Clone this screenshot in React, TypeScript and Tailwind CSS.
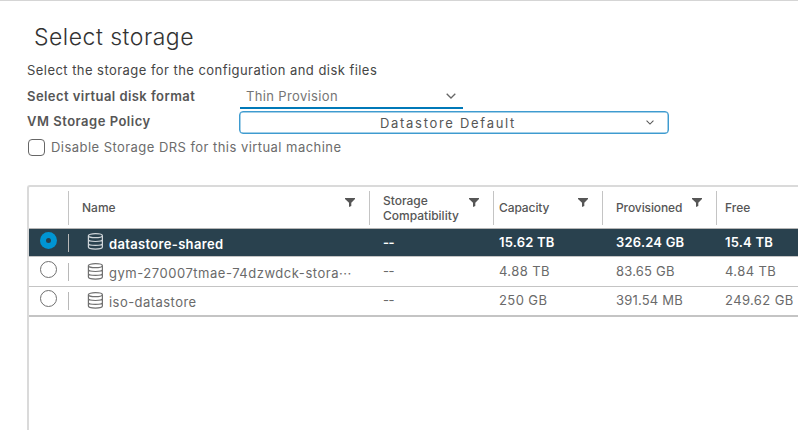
import type { ReactNode } from "react";
import clsx from "clsx";

function Chevron({ className }: { className: string }) {
  return (
    <svg viewBox="0 0 10 6" className={className} fill="none" stroke="currentColor" strokeWidth="1.3">
      <path d="M.7.8 5 5 9.3.8" />
    </svg>
  );
}

function Filter() {
  return (
    <svg viewBox="0 0 10 9" className="h-[9px] w-[10px] shrink-0 fill-[#565656]">
      <path d="M0 0h10v1L6.3 4.7V8L4 9V4.7L0 1z" />
    </svg>
  );
}

function Disk() {
  return (
    <svg viewBox="0 0 16 17" className="h-[17px] w-4 shrink-0" fill="none" stroke="currentColor" strokeWidth="1.2">
      <ellipse cx="8.4" cy="2.7" rx="7" ry="2" />
      <path d="M1.4 2.7v11.4c0 1.1 3.1 2 7 2s7-.9 7-2V2.7M1.4 6.6c0 1.1 3.1 1.9 7 1.9s7-.8 7-1.9M1.4 10.4c0 1.1 3.1 1.9 7 1.9s7-.8 7-1.9" />
    </svg>
  );
}

function HeadCell({ children, filter }: { children?: ReactNode; filter?: boolean }) {
  return (
    <div className="mt-[4px] flex h-[34px] justify-between border-l border-[#c4c4c4] pl-[13px] text-xs font-medium text-[#565656]">
      {children}
      {filter && (
        <div className="mt-[7px] mr-[14px]">
          <Filter />
        </div>
      )}
    </div>
  );
}

const columns = "grid grid-cols-[39px_301px_124px_109px_114px_82px]";

const rows = [
  {
    name: "datastore-shared", nameClass: "pt-px tracking-[0.33px]", iconClass: "-mt-px", height: "h-7", on: true,
    capacity: "15.62 TB", provisioned: "326.24 GB", free: "15.4 TB",
  },
  {
    name: "gym-270007tmae-74dzwdck-stora···", nameClass: "pt-px tracking-[0.53px]", iconClass: "mt-0", height: "h-[30px] pt-px", on: false,
    capacity: "4.88 TB", provisioned: "83.65 GB", free: "4.84 TB",
  },
  {
    name: "iso-datastore", nameClass: "pt-px tracking-[0.45px]", iconClass: "mt-0", height: "h-[30px]", on: false,
    capacity: "250 GB", provisioned: "391.54 MB", free: "249.62 GB",
  },
];

export default function App() {
  return (
    <div className="flex h-[430px] w-[798px] flex-col overflow-hidden border-t border-[#d5d5d5] bg-white font-['Inter',sans-serif] text-[13px] leading-[18px] whitespace-nowrap text-[#565656]">
      <h1 className="mt-[22px] ml-[34px] h-7 text-[23px] leading-7 font-light tracking-[0.5px] text-[#333]">Select storage</h1>
      <p className="mt-[10px] ml-[27px] tracking-[0.45px] text-[#454545]">Select the storage for the configuration and disk files</p>
      <div className="mt-[4px] ml-[27px] flex h-7">
        <div className="w-[213px] pt-[4px] font-semibold tracking-[0.44px]">Select virtual disk format</div>
        <div className="flex h-[26px] w-[223px] items-center justify-between border-b-2 border-[#0079b8] pt-0.5 pr-[7px] pl-1.5 text-[#757575]">
          <span className="tracking-[0.35px]">Thin Provision</span>
          <Chevron className="h-1.5 w-2.5 text-[#666]" />
        </div>
      </div>
      <div className="ml-[27px] flex h-[23px]">
        <div className="w-[212px] pt-px font-semibold tracking-[0.5px]">VM Storage Policy</div>
        <div className="flex h-[23px] w-[430px] items-center justify-between rounded-[4px] border border-[#3e9bd0] pr-[14px] pl-[140px] shadow-[inset_0_0_0_0.5px_#49a0d0]">
          <span className="tracking-[1.7px]">Datastore Default</span>
          <Chevron className="h-[5px] w-2 text-[#565656]" />
        </div>
      </div>
      <div className="mt-[4px] ml-[28px] flex h-[18px] items-center gap-[6px] text-[#6c6c6c]">
        <div className="h-[17px] w-[17px] rounded-[4px] border border-[#666]" />
        <span className="tracking-[0.45px]">Disable Storage DRS for this virtual machine</span>
      </div>
      <div className="mt-[29px] ml-[27px] flex-1 rounded-tl-[3px] border-t-2 border-l-2 border-[#dadada]">
        <div className={clsx(columns, "h-[42px] border-b border-[#b5b5b5]")}>
          <div />
          <HeadCell filter><span className="pt-[9px]">Name</span></HeadCell>
          <HeadCell filter><span className="pt-[2px] leading-[15px]">Storage<br />Compatibility</span></HeadCell>
          <HeadCell filter><span className="-ml-[8px] pt-[9px] tracking-[-0.1px]">Capacity</span></HeadCell>
          <HeadCell filter><span className="pt-[9px] tracking-[-0.1px]">Provisioned</span></HeadCell>
          <HeadCell><span className="-ml-[5px] pt-[9px]">Free</span></HeadCell>
        </div>
        {rows.map((r) => (
          <div
            key={r.name}
            className={clsx(
              columns, r.height, "border-b border-[#c4c4c4]",
              r.on ? "bg-[#29414e] font-semibold tracking-[0.2px] text-white" : "tracking-[0.4px] text-[#6a6a6a] last:border-b-2",
            )}
          >
            <div className="pt-[3px] pl-[11px]">
              <div className={clsx("h-[17px] w-[17px] rounded-full", r.on ? "flex items-center justify-center bg-[#0095d3]" : "border border-[#707070]")}>
                {r.on && <div className="h-[5px] w-[5px] rounded-full bg-[#29414e]" />}
              </div>
            </div>
            <div className="mt-[5px] flex h-[18px] border-l border-[#b8b8b8] pl-[18px]">
              <div className={clsx(r.iconClass, r.on ? "text-[#d0d6da]" : "text-[#707070]")}><Disk /></div>
              <span className={clsx("ml-[6px]", r.nameClass)}>{r.name}</span>
            </div>
            <div className="pt-[4px] pl-[14px] tracking-[-0.6px]">--</div>
            <div className="pt-[4px] pl-[6px]">{r.capacity}</div>
            <div className="pt-[4px] pl-[14px] tracking-[0.2px]">{r.provisioned}</div>
            <div className="pt-[4px] pl-[9px]">{r.free}</div>
          </div>
        ))}
      </div>
    </div>
  );
}
